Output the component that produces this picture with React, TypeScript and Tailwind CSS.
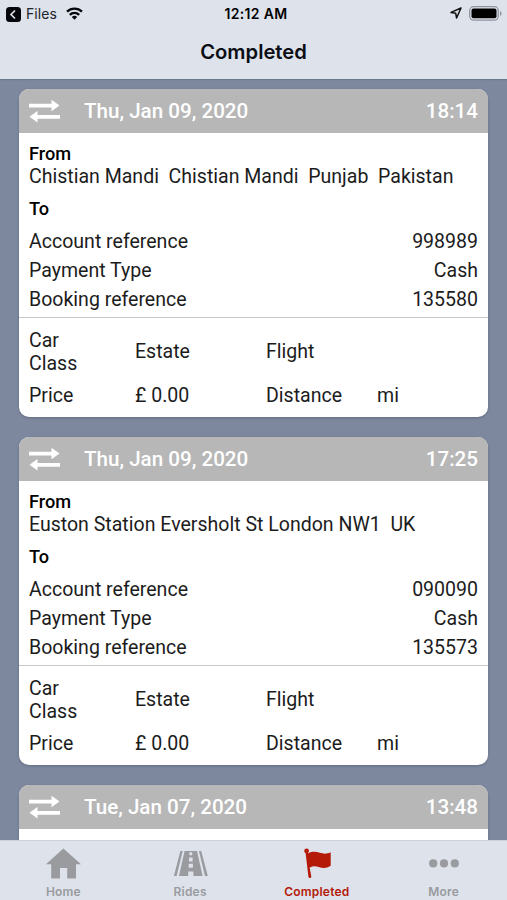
import React from "react";

type Ride = { date: string; time: string; details?: { from: string; account: string; booking: string } };

const rides: Ride[] = [
  {
    date: "Thu, Jan 09, 2020",
    time: "18:14",
    details: { from: "Chistian Mandi  Chistian Mandi  Punjab  Pakistan", account: "998989", booking: "135580" },
  },
  {
    date: "Thu, Jan 09, 2020",
    time: "17:25",
    details: { from: "Euston Station Eversholt St London NW1  UK", account: "090090", booking: "135573" },
  },
  { date: "Tue, Jan 07, 2020", time: "13:48" },
];

function SwapIcon() {
  return (
    <svg width="31" height="24" viewBox="0 0 31 24" fill="#fff" className="shrink-0">
      <path d="M0 4.8h22.5V.8L30.5 6.5l-8 5.7V8.6H0z M31 15.9H8.5v-3.8L0.5 17.8l8 5.7v-3.8H31z" />
    </svg>
  );
}

function Row({ label, value }: { label: string; value: string }) {
  return (
    <div className="flex h-[29.25px] items-center justify-between">
      <span>{label}</span>
      <span>{value}</span>
    </div>
  );
}

function RideCard({ ride }: { ride: Ride }) {
  const details = ride.details;
  return (
    <article className="h-[328px] shrink-0 overflow-hidden rounded-[10px] bg-white text-[19.55px] leading-[22.5px] text-[#1c1c1c] shadow-[0_1px_3px_rgba(0,0,0,0.2)]">
      <header className="flex h-[44px] items-center bg-[#b7b7b7] px-[10px] text-[20.6px] font-medium text-white">
        <SwapIcon />
        <span className="ml-6 flex-1 pt-px">{ride.date}</span>
        <span className="pt-px">{ride.time}</span>
      </header>
      {details && (
        <>
          <section className="h-[184px] px-[10px] pt-[10px]">
            <h2 className="text-[18.2px] font-medium text-black">From</h2>
            <p className="pt-px whitespace-pre">{details.from}</p>
            <h2 className="mt-[9px] mb-[7.5px] text-[18.2px] font-medium text-black">To</h2>
            <Row label="Account reference" value={details.account} />
            <Row label="Payment Type" value="Cash" />
            <Row label="Booking reference" value={details.booking} />
          </section>
          <section className="grid h-[100px] grid-cols-[106px_131px_111px_1fr] grid-rows-[46px_22px] content-start items-center gap-y-[10px] border-t-[1.5px] border-[#c8c8c8] px-[10px] pt-[12px]">
            <span className="w-[60px]">Car Class</span>
            <span>Estate</span>
            <span>Flight</span>
            <span />
            <span>Price</span>
            <span>£ 0.00</span>
            <span>Distance</span>
            <span>mi</span>
          </section>
        </>
      )}
    </article>
  );
}

function StatusBar() {
  return (
    <div className="grid h-7 grid-cols-3 items-center px-[6px] text-[14px] tracking-[0.3px]">
      <div className="flex items-center">
        <svg width="15" height="15" viewBox="0 0 15 15">
          <rect width="15" height="15" rx="3.5" fill="#05070c" />
          <path d="M9 3.5 5 7.5l4 4" fill="none" stroke="#dde2ec" strokeWidth="1.7" />
        </svg>
        <span className="-mt-px ml-[5px] text-[#20242c] tracking-[0.1px]">Files</span>
        <svg className="-mt-[2px] ml-[9px]" width="17" height="13" viewBox="0 0 17 13" fill="none" stroke="#05070c" strokeWidth="2.3">
          <path d="M1 4.7a10.8 10.8 0 0 1 15 0M3.8 7.8a6.8 6.8 0 0 1 9.4 0" />
          <path d="M8.5 12.8 5.8 10a4 4 0 0 1 5.4 0z" fill="#05070c" stroke="none" />
        </svg>
      </div>
      <span className="-mt-px pl-[5px] text-center font-semibold text-black">12:12 AM</span>
      <div className="-mt-[2px] flex items-center justify-end">
        <svg width="12" height="12" viewBox="0 0 12 12" fill="none" stroke="#111" strokeWidth="1.5" strokeLinejoin="round">
          <path d="M11 1 1 5.4l4.7.9.9 4.7z" />
        </svg>
        <svg className="ml-[7px] -mr-px" width="33" height="15" viewBox="0 0 33 15">
          <rect x=".7" y=".7" width="28.6" height="13.4" rx="4" fill="none" stroke="#8f949c" strokeWidth="1.3" />
          <rect x="2.5" y="2.5" width="25" height="9.8" rx="2" fill="#000" />
          <path d="M31 5v5q1.6-.6 1.6-2.5T31 5z" fill="#8f949c" />
        </svg>
      </div>
    </div>
  );
}

const tabs = [
  {
    label: "Home",
    icon: (
      <svg width="36" height="32" viewBox="0 0 36 32" fill="currentColor">
        <path d="M18.4.5 1 16.2h5.2v14.3H15V20h7.2v10.5H31V16.2h5z" />
      </svg>
    ),
  },
  {
    label: "Rides",
    icon: (
      <svg width="36" height="32" viewBox="0 0 36 32" fill="currentColor">
        <path d="M8.4 2.9h2.3L4.6 28H1.9zM29.2 2.9h-2.3L33 28h2.8z" />
        <path
          fillRule="evenodd"
          d="M12.6 2.9H25L30.6 28h-9.2v-4.5h-5.2V28H7zM17.4 4.3v3h2.8v-3zM17 9.6v3.9h3.6V9.6zM16.7 15.8v4h4.2v-4z"
        />
      </svg>
    ),
  },
  {
    label: "Completed",
    icon: (
      <svg width="36" height="32" viewBox="0 0 36 32" fill="currentColor">
        <circle cx="7.6" cy="2.9" r="2.4" />
        <path d="M6.5 4.2 8.8 4 9.2 5.4C13.4 3.2 16.9 3.6 20.8 4.8c4 1.2 7.2 1.2 10.9-.6v13.6c-4.8 3-8.1 2.3-12.1 1.2-3.3-1-5.6-1-8.9.8l1.6 8.7q.1 1.5-1.3 1.5t-1.6-1.5z" />
      </svg>
    ),
  },
  {
    label: "More",
    icon: (
      <svg width="36" height="32" viewBox="0 0 36 32" fill="currentColor">
        <circle cx="7.2" cy="15.4" r="4.1" />
        <circle cx="18" cy="15.4" r="4.1" />
        <circle cx="28.8" cy="15.4" r="4.1" />
      </svg>
    ),
  },
];

export default function App() {
  return (
    <div className="flex h-[900px] w-[507px] flex-col overflow-hidden bg-[#7d889f] font-['Roboto',sans-serif]">
      <header className="h-[79px] shrink-0 bg-[#dde2eb] font-['Inter',sans-serif] shadow-[0_1px_1px_rgba(60,70,90,0.25)]">
        <StatusBar />
        <h1 className="pt-[9px] text-center text-[20.2px] leading-[30px] font-semibold text-[#0b0e14]">Completed</h1>
      </header>
      <main className="flex min-h-0 flex-1 flex-col gap-5 overflow-hidden px-[19px] pt-[9.5px]">
        {rides.map((ride) => (
          <RideCard key={ride.time} ride={ride} />
        ))}
      </main>
      <nav className="grid h-[60px] shrink-0 grid-cols-4 border-t border-[#cdd2dc] bg-[#dde2eb] font-['Inter',sans-serif]">
        {tabs.map((tab) => (
          <div
            key={tab.label}
            className={
              tab.label === "Completed"
                ? "flex flex-col items-center pt-[7px] text-[#b51a08]"
                : "flex flex-col items-center pt-[7px] text-[#999b9f]"
            }
          >
            {tab.icon}
            <span className="mt-[3px] text-[12px] leading-[18px] font-semibold tracking-[0.2px]">{tab.label}</span>
          </div>
        ))}
      </nav>
    </div>
  );
}
